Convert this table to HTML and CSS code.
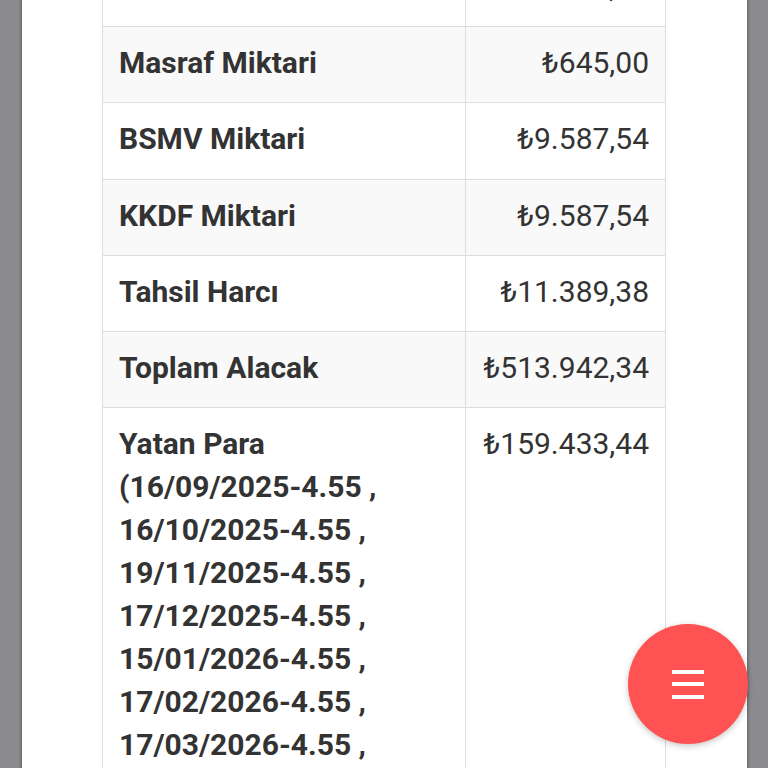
FILE: index.html
```html
<!DOCTYPE html>
<html lang="tr">
<head>
<meta charset="utf-8">
<title>Hesap Detayı</title>
<link rel="stylesheet" href="styles.css">
</head>
<body>
<div class="panel">
  <table class="detail-table">
    <colgroup><col class="col-label"><col class="col-value"></colgroup>
    <tbody>
      <tr><th>Faiz Miktari</th><td>₺38.426,51</td></tr>
      <tr><th>Masraf Miktari</th><td>₺645,00</td></tr>
      <tr><th>BSMV Miktari</th><td>₺9.587,54</td></tr>
      <tr><th>KKDF Miktari</th><td>₺9.587,54</td></tr>
      <tr><th>Tahsil Harcı</th><td>₺11.389,38</td></tr>
      <tr><th>Toplam Alacak</th><td>₺513.942,34</td></tr>
      <tr><th>Yatan Para (16/09/2025-4.55 , 16/10/2025-4.55 , 19/11/2025-4.55 , 17/12/2025-4.55 , 15/01/2026-4.55 , 17/02/2026-4.55 , 17/03/2026-4.55 , 16/04/2026-4.55 , 15/05/2026-4.55 )</th><td>₺159.433,44</td></tr>
    </tbody>
  </table>
</div>
<button class="fab" type="button" aria-label="Menü">
  <span class="bar"></span><span class="bar"></span><span class="bar"></span>
</button>
</body>
</html>
```
FILE: styles.css
```css
html, body {
  margin: 0;
  padding: 0;
  height: 100%;
  overflow: hidden;
}
body {
  background: #8c8c90;
  font-family: Roboto, "Liberation Sans", sans-serif;
  color: #333;
}
.panel {
  margin: -50px 21px 0 22px;
  padding: 0 81px 0 80px;
  background: #fff;
  min-height: 1600px;
  box-shadow: 0 0 3px 1px rgba(60, 60, 65, 0.55);
}
.detail-table {
  width: 100%;
  table-layout: fixed;
  border-collapse: collapse;
  font-size: 30px;
  line-height: 43px;
}
.col-label { width: 363px; }
.detail-table th,
.detail-table td {
  border: 1px solid #dddddd;
  padding: 14.1px 16px 18.1px;
  vertical-align: top;
}
.detail-table th {
  text-align: left;
  font-weight: 700;
}
.detail-table td {
  text-align: right;
  font-weight: 400;
}
.detail-table tr:nth-child(even) th,
.detail-table tr:nth-child(even) td {
  background: #f9f9f9;
}
.fab {
  position: fixed;
  right: 20px;
  bottom: 24px;
  width: 120px;
  height: 120px;
  border: 0;
  border-radius: 50%;
  background: #ff5252;
  box-shadow: 0 2px 6px rgba(0, 0, 0, 0.22);
  display: flex;
  flex-direction: column;
  align-items: center;
  justify-content: center;
  gap: 8.5px;
  padding: 0;
}
.fab .bar {
  display: block;
  width: 32px;
  height: 4px;
  background: #fff;
}
```
